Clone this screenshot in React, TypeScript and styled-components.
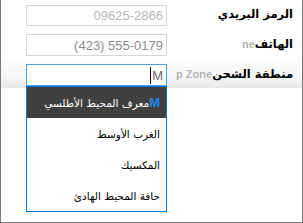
import React from "react";
import styled, { createGlobalStyle, css } from "styled-components";

const Global = createGlobalStyle`
  html, body { margin: 0; padding: 0; background: #fff; }
  body { width: 303px; height: 223px; overflow: hidden; }
`;

const Frame = styled.div`
  box-sizing: border-box;
  width: 303px;
  height: 223px;
  border: 1px solid #7a7a7a;
  border-top: none;
  background: #fff;
  direction: rtl;
  padding: 5px 9px 0 25px;
  display: flex;
  flex-direction: column;
  gap: 8px;
  font-family: "DejaVu Sans", sans-serif;
`;

const Row = styled.div<{ $h: number; $band?: boolean }>`
  display: flex;
  align-items: center;
  height: ${(p) => p.$h}px;
  ${(p) =>
    p.$band &&
    css`
      margin: -3px -9px -2px -25px;
      padding: 3px 9px 2px 25px;
      background: linear-gradient(#fdfdfd 0%, #f6f6f6 60%, #e8e8e8 100%);
    `}
`;

const LabelCell = styled.div`
  width: 126px;
  height: 100%;
  display: flex;
  align-items: center;
  justify-content: flex-start;
  padding-bottom: 3px;
  box-sizing: border-box;
`;

const Label = styled.span`
  font-weight: bold;
  font-size: 11.5px;
  color: #000;
  white-space: nowrap;
`;

const Ghost = styled.span`
  direction: ltr;
  unicode-bidi: isolate;
  font-family: "Liberation Sans", sans-serif;
  font-weight: bold;
  font-size: 11px;
  color: #b4b4b4;
  white-space: nowrap;
`;

const Field = styled.div<{ $focus?: boolean }>`
  position: relative;
  box-sizing: border-box;
  width: 141px;
  height: 100%;
  border: 1px solid ${(p) => (p.$focus ? "#4f9ee3" : "#d6d6d6")};
  background: #fff;
  display: flex;
  align-items: center;
  justify-content: flex-start;
  gap: 1px;
  padding: 0 3px;
`;

const Value = styled.div<{ $color: string }>`
  direction: ltr;
  unicode-bidi: isolate;
  font-family: "Liberation Sans", sans-serif;
  font-size: 13px;
  line-height: 15px;
  color: ${(p) => p.$color};
  white-space: nowrap;
`;

const Typed = styled.span`
  font-family: "Liberation Sans", sans-serif;
  font-size: 13px;
  color: #666;
`;

const Caret = styled.span`
  width: 1px;
  height: 17px;
  background: #000;
`;

const List = styled.div`
  position: absolute;
  top: calc(100% + 1px);
  left: -1px;
  right: -1px;
  border: 1px solid #0078d7;
  background: #fff;
  display: flex;
  flex-direction: column;
`;

const Item = styled.div<{ $active?: boolean }>`
  height: 31px;
  display: flex;
  align-items: center;
  justify-content: flex-start;
  padding: 0 6px;
  font-size: 10.5px;
  white-space: nowrap;
  color: ${(p) => (p.$active ? "#fff" : "#000")};
  background: ${(p) => (p.$active ? "#404040" : "#fff")};
`;

const Match = styled.span`
  font-family: "Liberation Sans", sans-serif;
  font-weight: bold;
  font-size: 13px;
  color: #1a8ae6;
`;

export default function App() {
  return (
    <>
      <Global />
      <Frame>
        <Row $h={21}>
          <LabelCell>
            <Label>الرمز البريدي</Label>
          </LabelCell>
          <Field>
            <Value $color="#b8b8b8">09625-2866</Value>
          </Field>
        </Row>
        <Row $h={22}>
          <LabelCell>
            <Label>الهاتف</Label>
            <Ghost>ne</Ghost>
          </LabelCell>
          <Field>
            <Value $color="#8c8c8c">(423) 555-0179</Value>
          </Field>
        </Row>
        <Row $h={22} $band>
          <LabelCell>
            <Label>منطقة الشحن</Label>
            <Ghost>p Zone</Ghost>
          </LabelCell>
          <Field $focus>
            <Typed>M</Typed>
            <Caret />
            <List>
              <Item $active>
                <Match>M</Match>معرف المحيط الأطلسي
              </Item>
              <Item>الغرب الأوسط</Item>
              <Item>المكسيك</Item>
              <Item>حافة المحيط الهادئ</Item>
            </List>
          </Field>
        </Row>
      </Frame>
    </>
  );
}
